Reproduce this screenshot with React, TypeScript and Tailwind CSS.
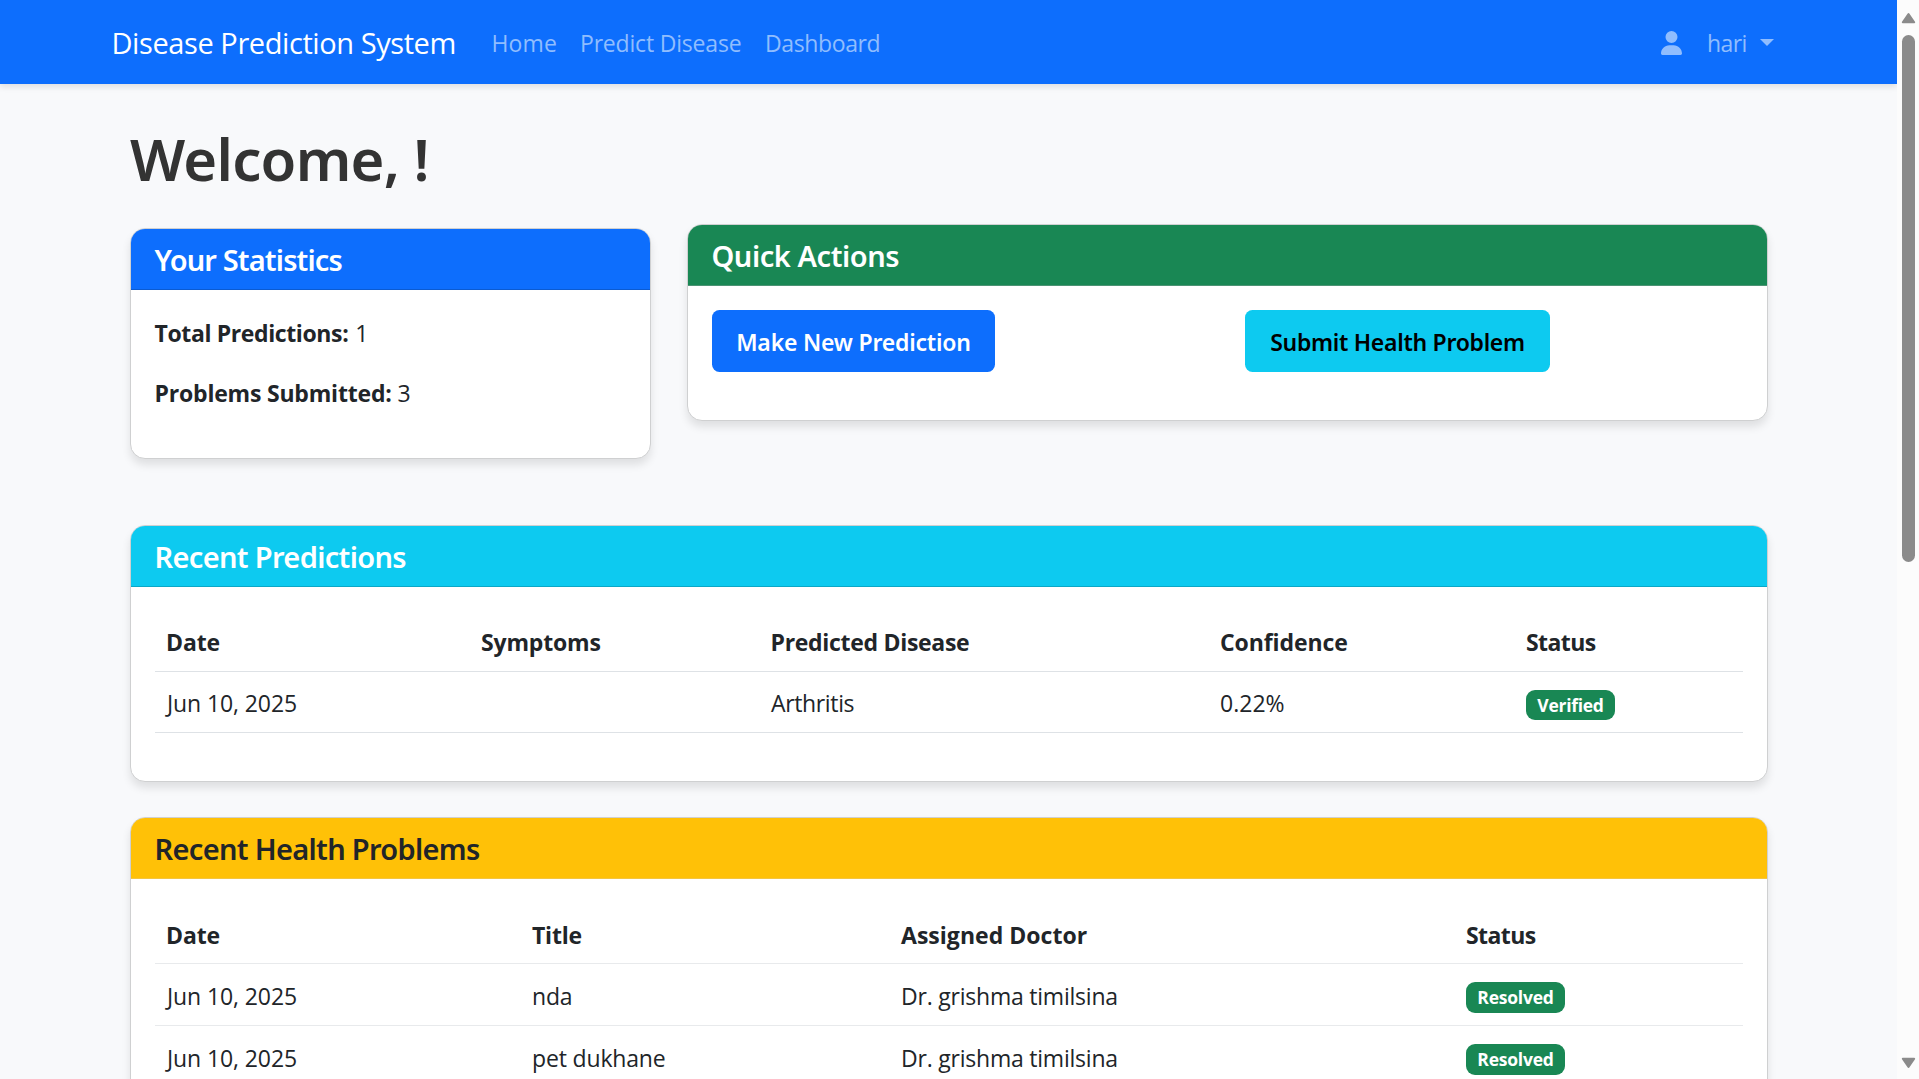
import type { ReactNode } from "react";

function UserIcon() {
  return (
    <svg viewBox="0 0 448 512" className="h-6 w-[21px]" fill="currentColor" aria-hidden="true">
      <path d="M224 256A128 128 0 1 0 224 0a128 128 0 1 0 0 256zm-45.7 48C79.8 304 0 383.8 0 482.3C0 498.7 13.3 512 29.7 512l388.6 0c16.4 0 29.7-13.3 29.7-29.7C448 383.8 368.2 304 269.7 304l-91.4 0z" />
    </svg>
  );
}

function Navbar() {
  return (
    <nav className="relative flex h-[84px] shrink-0 items-center bg-[#0d6efd] pt-[2px] pr-[123px] pl-[111.5px] text-[23px] whitespace-nowrap text-[#90bdfe] shadow-[0_3px_6px_rgba(0,0,0,0.1)]">
      <a className="w-[380px] text-[29px] tracking-[-0.42px] text-white">Disease Prediction System</a>
      <a className="w-[88.5px] tracking-[0.1px]">Home</a>
      <a className="w-[185px] tracking-[-0.19px]">Predict Disease</a>
      <a className="tracking-[-0.38px]">Dashboard</a>
      <div className="ml-auto flex items-center">
        <UserIcon />
        <a className="ml-[25px] w-[53px] tracking-[-0.6px]">hari</a>
        <span className="mt-[-2px] h-0 w-0 border-x-[7px] border-t-[7px] border-x-transparent border-t-[#90bdfe]" />
      </div>
    </nav>
  );
}

function Card({ title, header, className, children }: { title: string; header: string; className?: string; children: ReactNode }) {
  return (
    <section
      className={`overflow-hidden rounded-[15px] border border-[#cfd0d1] bg-white shadow-[0_6px_9px_rgba(0,0,0,0.1)] ${className ?? ""}`}
    >
      <h2
        className={`flex h-[61px] items-center border-b px-[23.5px] pt-[2px] font-['Noto_Sans',sans-serif] text-[29px] leading-9 font-semibold ${header}`}
      >
        {title}
      </h2>
      {children}
    </section>
  );
}

function Badge({ className, children }: { className: string; children: ReactNode }) {
  return (
    <span
      className={`flex items-center justify-center rounded-[9px] bg-[#198754] pt-px text-[17.5px] leading-none font-bold text-white ${className}`}
    >
      {children}
    </span>
  );
}

const th = "h-[61px] border-b border-[#dee2e6] pt-[13px] text-left align-top font-bold";
const td = "h-[61px] border-b border-[#dee2e6] pt-[13px] align-top";
const th2 = "h-[61px] border-b border-[#e8eaec] pt-[14px] text-left align-top font-bold";
const td2 = "h-[62px] border-b border-[#e8eaec] pt-[14px] align-top";

const problems = [
  { date: "Jun 10, 2025", title: "nda", doctor: "Dr. grishma timilsina", status: "Resolved" },
  { date: "Jun 10, 2025", title: "pet dukhane", doctor: "Dr. grishma timilsina", status: "Resolved" },
];

function Scrollbar() {
  return (
    <div className="flex w-[22px] shrink-0 flex-col items-center bg-[#fcfcfc] pt-3 pb-[10px] text-[#8b8b8b]">
      <svg viewBox="0 0 15 12" className="h-3 w-[15px]" fill="currentColor" stroke="currentColor" strokeWidth="2" strokeLinejoin="round">
        <path d="M7.5 2 L13.2 10.2 H1.8 Z" />
      </svg>
      <div className="mt-[11px] h-[527px] w-[13px] rounded-full bg-[#8b8b8b]" />
      <svg viewBox="0 0 15 12" className="mt-auto h-3 w-[15px]" fill="currentColor" stroke="currentColor" strokeWidth="2" strokeLinejoin="round">
        <path d="M7.5 10 L13.2 1.8 H1.8 Z" />
      </svg>
    </div>
  );
}

export default function App() {
  return (
    <div className="flex h-[1079px] w-[1919px] overflow-hidden bg-[#f8f9fb] font-['Open_Sans',sans-serif] text-[#212529]">
      <div className="flex h-full flex-1 flex-col overflow-hidden">
        <Navbar />
        <main className="flex flex-col pt-[38px] pr-[129.5px] pl-[130px] text-[23px] leading-9">
          <h1 className="h-[73px] font-['Noto_Sans',sans-serif] text-[58px] leading-[73px] font-semibold tracking-[-0.74px] text-[#333]">
            Welcome, !
          </h1>

          <div className="mt-[33px] flex h-[231px] items-start gap-9">
            <Card
              title="Your Statistics"
              header="bg-[#0d6efd] border-[#0b5bd1] text-white tracking-[-0.86px]"
              className="w-[521px] shrink-0"
            >
              <div className="flex h-[168px] flex-col gap-6 px-[23.5px] pt-[25px]">
                <p>
                  <strong className="mr-[1px] tracking-[-0.38px]">Total Predictions:</strong> 1
                </p>
                <p>
                  <strong className="tracking-[-0.2px]">Problems Submitted:</strong> 3
                </p>
              </div>
            </Card>
            <Card
              title="Quick Actions"
              header="bg-[#198754] border-[#4c9374] text-white tracking-[-0.45px]"
              className="-mt-1 flex-1"
            >
              <div className="grid h-[134px] grid-cols-[533px_1fr] items-start px-6 pt-6 font-['Noto_Sans',sans-serif] font-semibold">
                <button className="h-[62px] w-[283px] rounded-[7.5px] bg-[#0d6efd] pt-px tracking-[-0.2px] text-white">
                  Make New Prediction
                </button>
                <button className="h-[62px] w-[305px] rounded-[7.5px] bg-[#0dcaf0] pt-px tracking-[-0.29px] text-black">
                  Submit Health Problem
                </button>
              </div>
            </Card>
          </div>

          <Card
            title="Recent Predictions"
            header="bg-[#0dcaf0] border-[#0ba7c6] text-white tracking-[-0.66px]"
            className="mt-[66px] h-[257px]"
          >
            <div className="px-6 pt-6">
              <table className="w-full table-fixed border-separate border-spacing-0">
                <colgroup>
                  <col className="w-[326px]" />
                  <col className="w-[289px]" />
                  <col className="w-[450px]" />
                  <col className="w-[306px]" />
                  <col />
                </colgroup>
                <thead>
                  <tr>
                    <th className={`${th} pl-[11px] tracking-[-0.13px]`}>Date</th>
                    <th className={`${th} tracking-[-0.17px]`}>Symptoms</th>
                    <th className={`${th} pl-[0.5px] tracking-[-0.3px]`}>Predicted Disease</th>
                    <th className={`${th} tracking-[-0.09px]`}>Confidence</th>
                    <th className={`${th} tracking-[-0.6px]`}>Status</th>
                  </tr>
                </thead>
                <tbody>
                  <tr>
                    <td className={`${td} pl-[12px] tracking-[-0.1px]`}>Jun 10, 2025</td>
                    <td className={td} />
                    <td className={`${td} pl-px tracking-[-0.36px]`}>Arthritis</td>
                    <td className={`${td} tracking-[0.02px]`}>0.22%</td>
                    <td className={td}>
                      <Badge className="mt-[5px] h-[30px] w-[89px] tracking-[-0.28px]">Verified</Badge>
                    </td>
                  </tr>
                </tbody>
              </table>
            </div>
          </Card>

          <Card
            title="Recent Health Problems"
            header="bg-[#ffc107] border-[#f3c541] text-[#212529] tracking-[-0.68px]"
            className="mt-[35px] h-[350px]"
          >
            <div className="px-6 pt-6">
              <table className="w-full table-fixed border-separate border-spacing-0">
                <colgroup>
                  <col className="w-[377px]" />
                  <col className="w-[369px]" />
                  <col className="w-[565px]" />
                  <col />
                </colgroup>
                <thead>
                  <tr>
                    <th className={`${th2} pl-[11px] tracking-[-0.13px]`}>Date</th>
                    <th className={`${th2} tracking-[-0.2px]`}>Title</th>
                    <th className={`${th2} tracking-[0.03px]`}>Assigned Doctor</th>
                    <th className={`${th2} tracking-[-0.58px]`}>Status</th>
                  </tr>
                </thead>
                <tbody>
                  {problems.map((p) => (
                    <tr key={p.title}>
                      <td className={`${td2} pl-[12px] tracking-[-0.1px]`}>{p.date}</td>
                      <td className={`${td2} tracking-[-0.16px]`}>{p.title}</td>
                      <td className={`${td2} tracking-[-0.22px]`}>{p.doctor}</td>
                      <td className={td2}>
                        <Badge className="mt-[4px] h-[31px] w-[99px] tracking-[-0.22px]">{p.status}</Badge>
                      </td>
                    </tr>
                  ))}
                </tbody>
              </table>
            </div>
          </Card>
        </main>
      </div>
      <Scrollbar />
    </div>
  );
}
